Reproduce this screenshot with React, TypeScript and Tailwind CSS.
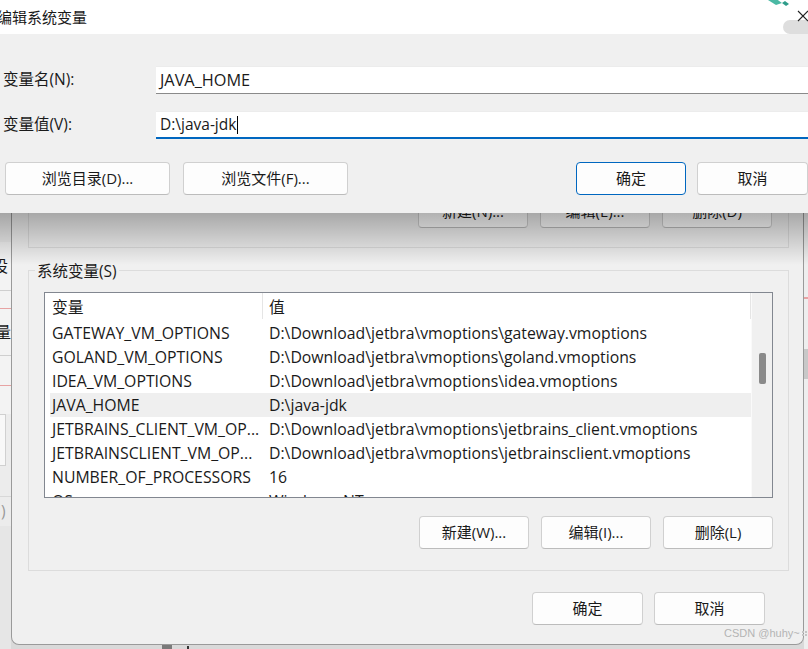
import React from 'react';

const rows = [
  { name: 'GATEWAY_VM_OPTIONS', value: 'D:\\Download\\jetbra\\vmoptions\\gateway.vmoptions' },
  { name: 'GOLAND_VM_OPTIONS', value: 'D:\\Download\\jetbra\\vmoptions\\goland.vmoptions' },
  { name: 'IDEA_VM_OPTIONS', value: 'D:\\Download\\jetbra\\vmoptions\\idea.vmoptions' },
  { name: 'JAVA_HOME', value: 'D:\\java-jdk', selected: true },
  { name: 'JETBRAINS_CLIENT_VM_OP...', value: 'D:\\Download\\jetbra\\vmoptions\\jetbrains_client.vmoptions' },
  { name: 'JETBRAINSCLIENT_VM_OP...', value: 'D:\\Download\\jetbra\\vmoptions\\jetbrainsclient.vmoptions' },
  { name: 'NUMBER_OF_PROCESSORS', value: '16' },
  { name: 'OS', value: 'Windows_NT' },
];

const Btn: React.FC<{ label: string; w?: string; primary?: boolean }> = ({ label, w = 'w-[110px]', primary }) => (
  <div
    className={`${w} h-[33px] flex items-center justify-center rounded-[4px] bg-[#fdfdfd] border ${
      primary ? 'border-[#0067c0]' : 'border-[#d0d0d0] border-b-[#bcbcbc]'
    } text-[15px] text-[#1a1a1a]`}
  >
    {label}
  </div>
);

export default function App() {
  return (
    <div className="relative w-[808px] h-[649px] overflow-hidden bg-[#d9d9d9] font-['Open_Sans','Noto_Sans_CJK_SC',sans-serif] text-[15.5px] leading-none text-[#1a1a1a]">
      {/* windows behind */}
      <div className="flex h-[649px]">
        {/* left window fragment */}
        <div className="w-[11px] flex flex-col bg-[#ececec] overflow-hidden">
          <div className="h-[242px]" />
          <div className="h-[49px] flex items-center border-b border-[#cfcfcf] bg-[#f3f3f3]">
            <span className="ml-[-8px] text-[16px]">设</span>
          </div>
          <div className="h-[18px] border-b border-[#e7a3a3] bg-[#f3f3f3]" />
          <div className="h-[47px] flex items-center border-b border-[#cfcfcf] bg-[#f3f3f3]">
            <span className="ml-[-5px] text-[16px]">量</span>
          </div>
          <div className="h-[30px] border-b border-[#e7a3a3] bg-[#f3f3f3]" />
          <div className="h-[28px] bg-[#f3f3f3]" />
          <div className="h-[52px] border-y border-r border-[#d0d0d0] mr-[5px] bg-[#f8f8f8]" />
          <div className="h-[30px]" />
          <div className="h-[30px] flex items-center border-t border-[#d8d8d8]">
            <span className="ml-[1px] text-[#999]">)</span>
          </div>
          <div className="flex-1 bg-[#e6e6e6]" />
        </div>

        {/* background dialog */}
        <div className="w-[793px] h-[645px] flex flex-col bg-[#f0f0f0] border-l border-r border-b border-[#9a9a9a] rounded-bl-[8px] rounded-br-[8px]">
          <div className="h-[140px]" />
          {/* upper group box (mostly hidden) */}
          <div className="ml-[16px] w-[761px] h-[108px] border-x border-b border-[#dcdcdc] flex flex-col justify-end items-end pr-[16px] pb-[19px]">
            <div className="flex gap-[12px]">
              <Btn label="新建(N)..." />
              <Btn label="编辑(E)..." />
              <Btn label="删除(D)" />
            </div>
          </div>

          {/* system variables group */}
          <div className="relative mt-[22px] ml-[16px] w-[761px] h-[301px] border border-[#dcdcdc] flex flex-col px-[15px]">
            <div className="absolute left-[6px] top-[-9px] px-[2px] bg-[#f0f0f0] leading-[18px]">系统变量(S)</div>
            <div className="mt-[21px] h-[206px] border border-[#828790] bg-white flex overflow-hidden text-[15.8px]">
              <div className="flex-1 flex flex-col">
                <div className="h-[26px] flex shrink-0">
                  <div className="w-[218px] pl-[7px] pt-[3px] flex items-center border-r border-[#e5e5e5]">变量</div>
                  <div className="flex-1 pl-[6px] pt-[3px] flex items-center border-r border-[#e5e5e5]">值</div>
                </div>
                <div className="pl-[5px] pt-[2px]">
                  {rows.map((r) => (
                    <div
                      key={r.name}
                      className={`h-[24px] flex items-center pt-[2px] ${r.selected ? 'bg-[#efefef]' : ''}`}
                    >
                      <div className="w-[213px] pl-[2px] overflow-hidden whitespace-nowrap">{r.name}</div>
                      <div className="flex-1 pl-[6px] whitespace-nowrap">{r.value}</div>
                    </div>
                  ))}
                </div>
              </div>
              <div className="w-[21px] bg-[#f0f0f0] border-l border-[#fafafa] flex justify-center pt-[60px]">
                <div className="w-[7px] h-[31px] bg-[#8a8a8a] rounded-[2px]" />
              </div>
            </div>
            <div className="mt-[18px] flex justify-end gap-[12px]">
              <Btn label="新建(W)..." />
              <Btn label="编辑(I)..." />
              <Btn label="删除(L)" />
            </div>
          </div>

          <div className="mt-[21px] flex justify-end gap-[11px] pr-[38px]">
            <Btn label="确定" w="w-[111px]" />
            <Btn label="取消" w="w-[111px]" />
          </div>
        </div>

        {/* right window fragment */}
        <div className="w-[4px] flex flex-col bg-[#eeeeee]">
          <div className="h-[297px]" />
          <div className="h-[2px] bg-[#e7a3a3]" />
          <div className="h-[50px]" />
          <div className="h-[30px] bg-[#c8c8c8]" />
          <div className="flex-1" />
        </div>
      </div>

      {/* bottom fragment under the dialog */}
      <div className="absolute left-[162px] top-[645px] w-[10px] h-[4px] bg-[#7a7a7a]" />
      <div className="absolute left-[187px] top-[646px] w-[2px] h-[3px] bg-[#333]" />

      {/* shadow cast by the edit dialog */}
      <div className="absolute left-0 top-[213px] w-[808px] h-[52px] bg-gradient-to-b from-black/30 to-transparent" />

      {/* edit dialog on top */}
      <div className="absolute left-0 top-0 w-[808px] h-[213px] flex flex-col">
        <div className="h-[34px] bg-white flex items-center relative">
          <span className="ml-[-3px] text-[15px]">编辑系统变量</span>
          <svg className="absolute left-[766px] top-0" width="26" height="9" viewBox="0 0 26 9">
            <path d="M2 0 L10 5 L16 3 L9 -2 Z" fill="#4bb9a4" />
            <path d="M16 3 L20 6 L23 4 L19 1 Z" fill="#2e9c8a" />
          </svg>
          <div className="absolute left-[783px] top-[20px] w-[50px] h-[14px] rounded-full bg-[#dedede]" />
          <svg className="absolute left-[797px] top-[10px]" width="12" height="12" viewBox="0 0 12 12">
            <path d="M1 1 L11 11 M11 1 L1 11" stroke="#222" strokeWidth="1.1" />
          </svg>
        </div>
        <div className="flex-1 bg-[#f0f0f0] flex flex-col pt-[32px]">
          <div className="flex items-center h-[28px]">
            <div className="w-[156px] pl-[3px]">变量名(N):</div>
            <div className="flex-1 h-[28px] bg-white border-t border-[#ececec] border-b border-b-[#8a8a8a] flex items-center pl-[4px] text-[16.3px]">
              JAVA_HOME
            </div>
          </div>
          <div className="flex items-center h-[28px] mt-[17px]">
            <div className="w-[156px] pl-[3px]">变量值(V):</div>
            <div className="flex-1 h-[28px] bg-white border-t border-[#ececec] border-b-2 border-b-[#0067c0] flex items-center pl-[4px]">
              D:\java-jdk
              <span className="ml-[1px] w-[1px] h-[18px] bg-black" />
            </div>
          </div>
          <div className="flex mt-[23px] pl-[5px]">
            <Btn label="浏览目录(D)..." w="w-[165px]" />
            <div className="ml-[13px]">
              <Btn label="浏览文件(F)..." w="w-[165px]" />
            </div>
            <div className="flex-1" />
            <Btn label="确定" primary />
            <div className="ml-[11px]">
              <Btn label="取消" w="w-[111px]" />
            </div>
          </div>
        </div>
      </div>

      {/* watermark */}
      <div className="absolute left-[724px] top-[628px] flex items-center gap-[2px] text-[11px] text-[#b4b4b4] font-['Liberation_Sans',sans-serif]">
        CSDN @huhy~
        <span className="grid grid-cols-2 gap-[1px]">
          <span className="w-[2px] h-[2px] bg-[#c4c4c4]" />
          <span className="w-[2px] h-[2px] bg-[#c4c4c4]" />
          <span className="w-[2px] h-[2px] bg-[#c4c4c4]" />
          <span className="w-[2px] h-[2px] bg-[#c4c4c4]" />
        </span>
      </div>
    </div>
  );
}
